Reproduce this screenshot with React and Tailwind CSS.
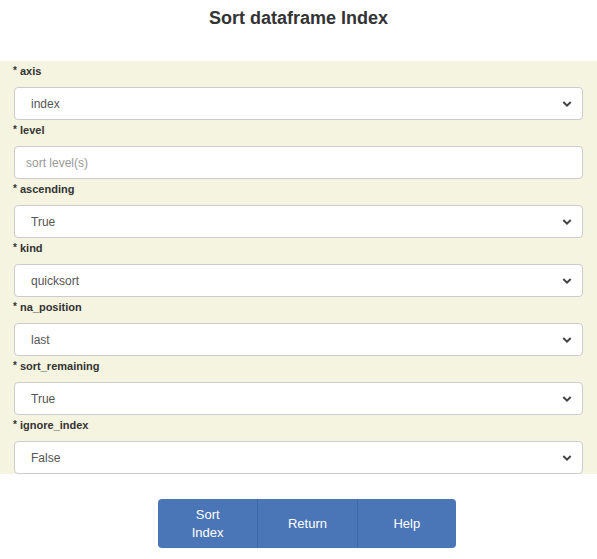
import { useState } from 'react';

const fields = [
    { name: 'axis', type: 'select', value: 'index', options: ['index', 'columns'] },
    { name: 'level', type: 'input', placeholder: 'sort level(s)' },
    { name: 'ascending', type: 'select', value: 'True', options: ['True', 'False'] },
    { name: 'kind', type: 'select', value: 'quicksort', options: ['quicksort', 'mergesort', 'heapsort'] },
    { name: 'na_position', type: 'select', value: 'last', options: ['last', 'first'] },
    { name: 'sort_remaining', type: 'select', value: 'True', options: ['True', 'False'] },
    { name: 'ignore_index', type: 'select', value: 'False', options: ['False', 'True'] },
];

function Chevron() {
    return (
        <svg className="pointer-events-none absolute right-[11px] top-1/2 -translate-y-1/2" width="10" height="7" viewBox="0 0 10 7">
            <path d="M1.3 1.5 L5 5.2 L8.7 1.5" fill="none" stroke="#444" strokeWidth="2" />
        </svg>
    );
}

export default function App() {
    const [values, setValues] = useState(
        Object.fromEntries(fields.map((f) => [f.name, f.value || '']))
    );

    return (
        <div className="w-[597px] bg-white font-['Liberation_Sans',Arial,sans-serif] text-[#333]">
            {/* Title */}
            <div className="h-[61px] pt-[7px] text-center">
                <h1 className="text-[18px] font-bold leading-[22px] text-[#333]">Sort dataframe Index</h1>
            </div>

            {/* Form panel */}
            <div className="bg-[#f5f4e0] pt-[2px]">
                {fields.map((f) => (
                    <div key={f.name} className="mb-[2px] last:mb-0">
                        <label className="block h-[16px] pl-[13px] text-[11px] font-bold leading-[16px] text-[#333]">
                            <span className="relative top-[-1px] text-[10px]">*</span> {f.name}
                        </label>
                        <div className="relative mx-[14px] mt-[8px]">
                            {f.type === 'select' ? (
                                <>
                                    <select
                                        value={values[f.name]}
                                        onChange={(e) => setValues({ ...values, [f.name]: e.target.value })}
                                        className="block h-[33px] w-full appearance-none rounded-[4px] border border-[#ccc] bg-white pl-[16px] text-[12px] text-[#555] outline-none"
                                    >
                                        {f.options.map((o) => (
                                            <option key={o}>{o}</option>
                                        ))}
                                    </select>
                                    <Chevron />
                                </>
                            ) : (
                                <input
                                    placeholder={f.placeholder}
                                    className="block h-[33px] w-full rounded-[4px] border border-[#ccc] bg-white px-[11px] text-[12px] text-[#555] outline-none placeholder:text-[#999]"
                                />
                            )}
                        </div>
                    </div>
                ))}
            </div>

            {/* Buttons */}
            <div className="flex justify-center pt-[25px] pl-[17px]">
                <div className="grid h-[49px] w-[298px] grid-cols-3 overflow-hidden rounded-[4px] bg-[#4a75b7] text-[13px] leading-[18px] text-white">
                    <button className="px-[28px] text-center">Sort Index</button>
                    <button className="border-l border-[#3e67a6] text-center">Return</button>
                    <button className="border-l border-[#3e67a6] text-center">Help</button>
                </div>
            </div>
        </div>
    );
}
